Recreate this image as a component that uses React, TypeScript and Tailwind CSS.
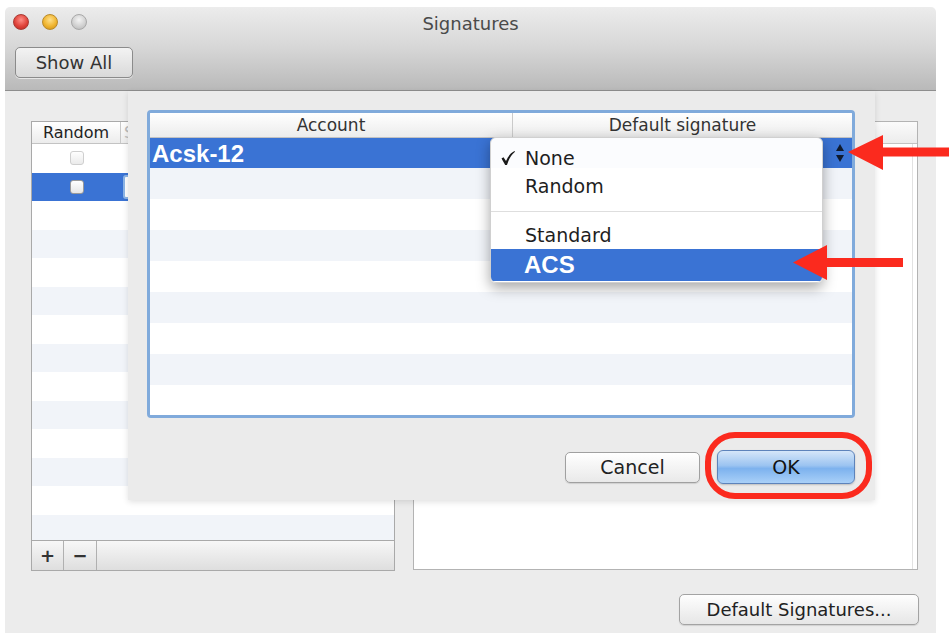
import React from "react";

const leftRows = Array.from({ length: 15 }, (_, i) => i);
const sheetRows = Array.from({ length: 9 }, (_, i) => i);

function Light({ cls }: { cls: string }) {
  return <div className={`w-[16px] h-[16px] rounded-full ${cls}`} />;
}

function Checkbox({ dim }: { dim?: boolean }) {
  return (
    <div
      className={`w-[14px] h-[14px] rounded-[3px] border bg-[linear-gradient(to_bottom,#ffffff,#e6e6e6)] ${
        dim ? "border-[#c4c4c4] opacity-80" : "border-[#9a9a9a]"
      }`}
    />
  );
}

function CheckMark() {
  return (
    <svg width="16" height="16" viewBox="0 0 16 16" className="shrink-0">
      <path d="M1.5 8.5 L3.5 7.2 L6 11 C8 6.5 10.5 3 14.5 1 L15 1.8 C11.5 4.5 9 8.5 7 15 L5.2 15 Z" fill="#1a1a1a" />
    </svg>
  );
}

function LeftTable() {
  return (
    <div className="w-[364px] flex flex-col">
      <div className="h-[420px] border border-[#a9a9a9] bg-white flex flex-col overflow-hidden">
        <div className="h-[22px] shrink-0 flex border-b border-[#c3c3c3] bg-[linear-gradient(to_bottom,#ffffff,#ececec)] text-[16px] text-[#222]">
          <div className="w-[89px] border-r border-[#c8c8c8] flex items-center justify-center leading-none">Random</div>
          <div className="flex-1 flex items-center pl-[3px] text-[#bbb] leading-none">Signature</div>
        </div>
        <div className="flex-1 overflow-hidden">
          {leftRows.map((i) => {
            const selected = i === 1;
            const bg = selected ? "bg-[#3a73d4]" : i % 2 === 0 ? "bg-white" : "bg-[#f1f4f9]";
            return (
              <div key={i} className={`h-[28.5px] flex ${bg}`}>
                <div className="w-[89px] flex items-center justify-center">
                  {i === 0 && <Checkbox dim />}
                  {i === 1 && <Checkbox />}
                </div>
                <div className="flex-1 flex items-center pl-[2px]">
                  {selected && (
                    <div className="h-[24px] w-[200px] rounded-[3px] border-2 border-[#8db5e6] bg-white" />
                  )}
                </div>
              </div>
            );
          })}
        </div>
      </div>
      <div className="h-[30px] flex border border-t-0 border-[#a9a9a9] bg-[linear-gradient(to_bottom,#f7f7f7,#dedede)]">
        <div className="w-[32px] border-r border-[#b0b0b0] flex items-center justify-center text-[18px] font-bold text-[#333] leading-none">+</div>
        <div className="w-[33px] border-r border-[#b0b0b0] flex items-center justify-center text-[18px] font-bold text-[#333] leading-none">−</div>
        <div className="flex-1" />
      </div>
    </div>
  );
}

function RightPanel() {
  return (
    <div className="w-[505px] h-[449px] border border-[#b3b3b3] bg-white flex flex-col">
      <div className="h-[22px] border-b border-[#c3c3c3] bg-[linear-gradient(to_bottom,#fbfbfb,#ececec)]" />
      <div className="flex-1 flex justify-end">
        <div className="w-[5px] border-l border-[#e2e2e2]" />
      </div>
    </div>
  );
}

function Stepper() {
  return (
    <svg width="10" height="20" viewBox="0 0 10 20" className="shrink-0">
      <polygon points="5,1 9,8 1,8" fill="#0f1a2e" />
      <polygon points="1,12 9,12 5,19" fill="#0f1a2e" />
    </svg>
  );
}

function PopupMenu() {
  return (
    <div className="absolute left-[362px] top-[46px] w-[333px] h-[146px] rounded-[6px] bg-white/[0.98] border border-[#d0d0d0] shadow-[0_5px_14px_rgba(0,0,0,0.35)] pt-[6px] flex flex-col text-[19px] text-[#1e1e1e] overflow-hidden">
      <div className="h-[28px] flex items-center">
        <span className="w-[34px] pl-[9px] flex items-center">
          <CheckMark />
        </span>
        <span className="leading-none">None</span>
      </div>
      <div className="h-[28px] flex items-center pl-[34px] leading-none">Random</div>
      <div className="h-[22px] flex items-center">
        <div className="w-full h-px bg-[#dedede]" />
      </div>
      <div className="h-[27px] flex items-center pl-[34px] leading-none">Standard</div>
      <div className="h-[32px] flex items-center pl-[33px] bg-[#3a73d4] text-white font-['Liberation_Sans',sans-serif] font-bold text-[24px] leading-none">
        ACS
      </div>
    </div>
  );
}

function Sheet() {
  return (
    <div className="absolute left-[123px] top-0 w-[747px] h-[409px] bg-[#ebebeb] shadow-[0_2px_6px_rgba(0,0,0,0.12)] pt-[19px] pl-[19px] pr-[20px] flex flex-col">
      <div className="h-[308px] rounded-[4px] border-[3px] border-[#80aadb] bg-white flex flex-col overflow-hidden">
        <div className="h-[25px] shrink-0 flex border-b border-[#c2c2c2] bg-[linear-gradient(to_bottom,#ffffff,#ececec)] text-[17px] text-[#333]">
          <div className="w-[363px] border-r border-[#cacaca] flex items-center justify-center leading-none">Account</div>
          <div className="flex-1 flex items-center justify-center leading-none">Default signature</div>
        </div>
        <div className="h-[30px] shrink-0 flex bg-[#3a73d4]">
          <div className="w-[363px] flex items-center pl-[2px] pt-[2px] text-white font-['Liberation_Sans',sans-serif] font-bold text-[24px] leading-none">
            Acsk-12
          </div>
          <div className="flex-1 flex items-center justify-end pr-[7px]">
            <Stepper />
          </div>
        </div>
        <div className="flex-1 overflow-hidden">
          {sheetRows.map((i) => (
            <div key={i} className={`h-[31px] ${i % 2 === 0 ? "bg-[#f1f4f9]" : "bg-white"}`} />
          ))}
        </div>
      </div>
      <div className="mt-[32px] h-[34px] flex items-center justify-end gap-[17px]">
        <button className="w-[135px] h-[31px] rounded-[5px] border border-[#a0a0a0] bg-[linear-gradient(to_bottom,#ffffff,#e9e9e9)] shadow-[0_1px_1px_rgba(0,0,0,0.12)] text-[19px] text-[#222] leading-none">
          Cancel
        </button>
        <button className="w-[138px] h-[34px] rounded-[6px] border border-[#5d83bb] bg-[linear-gradient(to_bottom,#d5e6f9_0%,#9cc4f1_45%,#7db2ee_55%,#a9d0f8_100%)] shadow-[0_1px_2px_rgba(0,0,0,0.2)] text-[19px] text-[#111] leading-none">
          OK
        </button>
      </div>
      <PopupMenu />
    </div>
  );
}

export default function App() {
  return (
    <div className="relative w-[949px] h-[633px] bg-white overflow-hidden pt-[7px] pl-[5px] font-['DejaVu_Sans',sans-serif]">
      <div className="w-[931px] h-[626px] flex flex-col rounded-t-[5px] overflow-hidden">
        {/* title bar + toolbar */}
        <div className="h-[84px] shrink-0 border-b border-[#8e8e8e] bg-[linear-gradient(to_bottom,#ececec,#d6d6d6_50%,#b9b9b9)]">
          <div className="h-[30px] grid grid-cols-[1fr_auto_1fr] items-center">
            <div className="flex items-center gap-[13px] pl-[8px]">
              <Light cls="bg-[radial-gradient(circle_at_50%_35%,#ff8e86,#e0443b_55%,#b5241d)] border border-[#a93a33]" />
              <Light cls="bg-[radial-gradient(circle_at_50%_35%,#ffe08a,#f0b530_55%,#c98a12)] border border-[#b98a2a]" />
              <Light cls="bg-[radial-gradient(circle_at_50%_35%,#f4f4f4,#d2d2d2_55%,#b4b4b4)] border border-[#a8a8a8]" />
            </div>
            <div className="text-[18px] text-[#4a4a4a] leading-none pt-[4px]">Signatures</div>
            <div />
          </div>
          <div className="mt-[10px] ml-[10px] w-[118px] h-[31px] rounded-[5px] border border-[#8b8b8b] bg-[linear-gradient(to_bottom,#f3f3f3,#d9d9d9)] shadow-[0_1px_0_rgba(255,255,255,0.6)] flex items-center justify-center text-[18px] text-[#333] leading-none">
            Show All
          </div>
        </div>

        {/* window content */}
        <div className="relative flex-1 bg-[#ececec] pt-[30px] pl-[26px]">
          <div className="flex gap-[18px]">
            <LeftTable />
            <RightPanel />
          </div>
          <div className="mt-[23px] flex justify-end pr-[17px]">
            <button className="w-[240px] h-[31px] rounded-[5px] border border-[#a3a3a3] bg-[linear-gradient(to_bottom,#fefefe,#e6e6e6)] shadow-[0_1px_1px_rgba(0,0,0,0.12)] text-[18px] text-[#222] leading-none">
              Default Signatures...
            </button>
          </div>
          <Sheet />
        </div>
      </div>

      {/* annotation: ring around OK */}
      <div className="absolute left-[705px] top-[432px] w-[167px] h-[67px] rounded-[30px] border-[6px] border-[#fb2a1e]" />

      {/* annotation arrows */}
      <svg className="absolute inset-0 pointer-events-none" width="949" height="633" viewBox="0 0 949 633">
        <polygon points="848,152 883,135 883,147.5 949,147.5 949,156.5 883,156.5 883,170" fill="#fb2a1e" />
        <polygon points="793,262.5 827,245 827,258 903,258 903,267 827,267 827,280" fill="#fb2a1e" />
      </svg>
    </div>
  );
}
